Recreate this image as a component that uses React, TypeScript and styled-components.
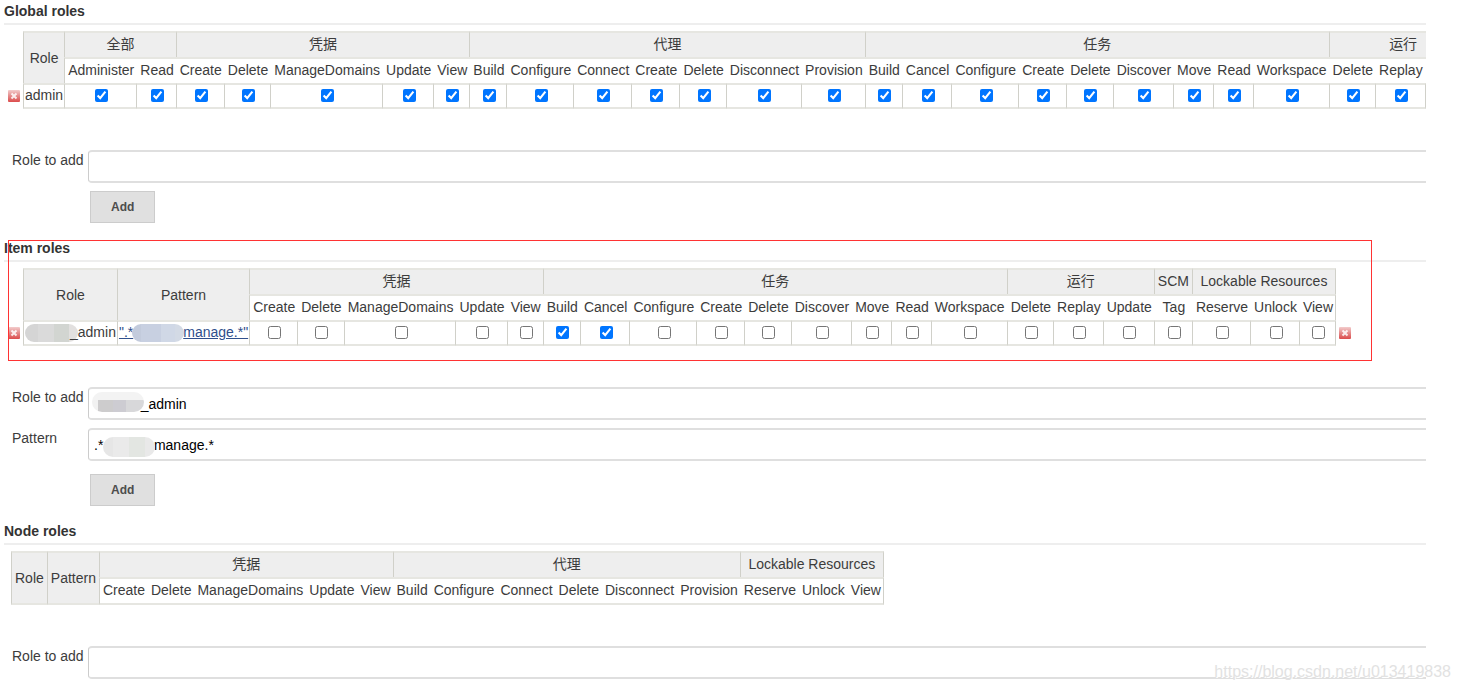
import React, { useId } from "react";
import styled, { createGlobalStyle, css } from "styled-components";

const GlobalStyle = createGlobalStyle`
  body {
    margin: 0;
    background: #fff;
    color: #3c3c3c;
    font-family: "Liberation Sans", Arial, "Noto Sans CJK SC", sans-serif;
    font-size: 14px;
    line-height: 20px;
  }
`;

const line = "#e6e6e1";
const divider = "#d0d0c9";

const Page = styled.main`
  position: relative;
  overflow: hidden;
  padding: 0 34px 0 4px;
`;

const Section = styled.section`
  position: relative;
`;

const Heading = styled.h2`
  margin: 0;
  padding: 1px 0 2px;
  font-size: 14px;
  line-height: 20px;
  font-weight: bold;
  color: #333;
  border-bottom: 2px solid #eee;
`;

const Clip = styled.div`
  overflow: hidden;
`;

const Matrix = styled.table<{ $bare?: boolean }>`
  border-collapse: separate;
  border-spacing: 0;
  margin: 6px 0 0 ${(p) => (p.$bare ? 7 : 4)}px;
  white-space: nowrap;
  text-align: center;
`;

const IconCell = styled.td<{ $end?: boolean }>`
  box-sizing: border-box;
  padding: ${(p) => (p.$end ? "0 0 0 3px" : "0 3px 0 0")};
  line-height: 0;
  vertical-align: middle;
`;

const HeadCell = styled.th<{ $last?: boolean }>`
  height: 22px;
  padding: 0 3px 2px;
  font-weight: normal;
  background: #eee;
  border-top: 2px solid ${line};
  border-left: 1px solid ${divider};
  ${(p) => p.$last && css`border-right: 1px solid ${divider};`}
`;

const NameCell = styled.th<{ $first?: boolean; $last?: boolean; $end?: boolean }>`
  height: 22px;
  padding: 0 2px 2px 4px;
  font-weight: normal;
  border-top: 2px solid ${line};
  ${(p) => p.$first && css`
    padding-left: 3px;
    border-left: 1px solid ${divider};
  `}
  &:empty {
    min-width: 46px;
  }
  ${(p) => p.$last && css`border-right: 1px solid ${divider};`}
  ${(p) => p.$end && css`border-bottom: 2px solid ${line};`}
`;

const SpanCell = styled(HeadCell)<{ $end?: boolean }>`
  padding: 0 3px;
  ${(p) => p.$end && css`border-bottom: 2px solid ${line};`}
`;

const BodyCell = styled.td<{ $last?: boolean }>`
  height: 20px;
  padding: 0 1px 2px;
  border-top: 2px solid ${line};
  border-bottom: 2px solid ${line};
  border-left: 1px solid ${divider};
  ${(p) => p.$last && css`border-right: 1px solid ${divider};`}
`;

const TickCell = styled(BodyCell)`
  padding-left: 3px;
`;

const Tick = styled.input`
  display: block;
  width: 13px;
  height: 13px;
  margin: 0 auto;
  accent-color: #0075ff;
`;

const IconButton = styled.button`
  display: block;
  padding: 0;
  border: 0;
  background: none;
  line-height: 0;
`;

const PatternLink = styled.a`
  color: #2f4f8c;
  text-decoration: underline;
`;

const tones = {
  role: "linear-gradient(90deg, #d5d5d5 25%, #dadada 25% 54%, #d2d5d1 54% 83%, #e2e0df 83%)",
  link: "linear-gradient(90deg, #c3cbdc 18%, #c8d0e1 18% 55%, #d0d8e6 55% 82%, #d3dae5 82%)",
  value: "linear-gradient(#f3f3f3 40%, transparent 40%), linear-gradient(90deg, #f1f1f1 12%, #cdcccd 12% 40%, #cdccd2 40% 66%, #d8d8da 66%)",
  pattern: "linear-gradient(90deg, #e6e6e6 20%, #eaeaea 20% 50%, #e3e6e2 50% 80%, #e9e9e9 80%)",
};

const Smudge = styled.span<{ $tone: keyof typeof tones }>`
  display: inline-block;
  height: 18px;
  border-radius: 9px;
  vertical-align: middle;
  background: ${(p) => tones[p.$tone]};
`;

const RoleSmudge = styled(Smudge)`
  width: 53px;
  margin-right: -8px;
`;

const LinkSmudge = styled(Smudge)`
  width: 52px;
  margin: 0 -1px;
`;

const FieldSmudge = styled(Smudge)<{ $left: number; $top: number }>`
  position: absolute;
  left: ${(p) => p.$left}px;
  top: ${(p) => p.$top}px;
  width: 52px;
  height: 20px;
  border-radius: 10px;
`;

const Form = styled.form<{ $closing?: boolean }>`
  display: flex;
  flex-direction: column;
  gap: 8px;
  padding: 41px 0 ${(p) => (p.$closing ? 10 : 14)}px 8px;
`;

const Field = styled.div`
  display: flex;
  align-items: flex-start;
`;

const Label = styled.label`
  flex: none;
  width: 76px;
`;

const Control = styled.div`
  position: relative;
  flex: 1;
  margin-right: -8px;
`;

const TextBox = styled.input`
  display: block;
  box-sizing: border-box;
  width: 100%;
  height: 33px;
  padding: 0 5px;
  border: solid #ccc;
  border-width: 2px 1px;
  border-color: #dfdfdf #ccc;
  border-radius: 4px;
  background: #fff;
  color: #000;
  font: inherit;
`;

const Actions = styled.div<{ $spaced?: boolean }>`
  padding: ${(p) => (p.$spaced ? 5 : 0)}px 0 0 78px;
`;

const AddButton = styled.button`
  display: block;
  height: 32px;
  padding: 0 20px;
  border: 1px solid #ccc;
  background: #e0e0e0;
  color: #4d4d4d;
  font: bold 12px/20px "Liberation Sans", Arial, sans-serif;
`;

const Highlight = styled.div`
  position: absolute;
  left: 4px;
  right: 54px;
  top: 3px;
  height: 119px;
  border: 1px solid #f33;
  pointer-events: none;
`;

const Watermark = styled.div`
  position: absolute;
  right: 9px;
  bottom: 7px;
  color: #e2e2e2;
  font-size: 16px;
  line-height: 20px;
  text-shadow: 1px 1px 0 #fff;
  pointer-events: none;
`;

type Group = { title: string; names: string[] };

const credentials: Group = { title: "凭据", names: ["Create", "Delete", "ManageDomains", "Update", "View"] };
const jobs: Group = {
  title: "任务",
  names: ["Build", "Cancel", "Configure", "Create", "Delete", "Discover", "Move", "Read", "Workspace"],
};
const runs: Group = { title: "运行", names: ["Delete", "Replay", "Update"] };
const lockable: Group = { title: "Lockable Resources", names: ["Reserve", "Unlock", "View"] };

const globalGroups: Group[] = [
  { title: "全部", names: ["Administer", "Read"] },
  credentials,
  { title: "代理", names: ["Build", "Configure", "Connect", "Create", "Delete", "Disconnect", "Provision"] },
  jobs,
  { title: "运行", names: ["Delete", "Replay", ""] },
];
const itemGroups: Group[] = [credentials, jobs, runs, { title: "SCM", names: ["Tag"] }, lockable];
const nodeGroups: Group[] = [
  credentials,
  { title: "代理", names: ["Build", "Configure", "Connect", "Delete", "Disconnect", "Provision"] },
  lockable,
];

function RemoveButton() {
  const fill = useId();
  return (
    <IconButton type="button" aria-label="Remove role">
      <svg width="12" height="12" viewBox="0 0 12 12">
        <defs>
          <linearGradient id={fill} x1="0" y1="0" x2="0" y2="1">
            <stop offset="0" stopColor="#f3cccc" />
            <stop offset="0.5" stopColor="#e48a8a" />
            <stop offset="1" stopColor="#dc4c4c" />
          </linearGradient>
        </defs>
        <rect width="12" height="12" rx="1" fill={`url(#${fill})`} />
        <path d="M3.5 3.5L8.5 8.5M8.5 3.5L3.5 8.5" stroke="#fff" strokeOpacity="0.85" strokeWidth="2" />
      </svg>
    </IconButton>
  );
}

type MatrixProps = {
  groups: Group[];
  withPattern?: boolean;
  role?: React.ReactNode;
  pattern?: React.ReactNode;
  isChecked?: (group: Group, name: string) => boolean;
  removeAtEnd?: boolean;
};

function RoleMatrix({ groups, withPattern, role, pattern, isChecked, removeAtEnd }: MatrixProps) {
  const hasRow = role !== undefined;
  const lastGroup = groups.length - 1;
  return (
    <Clip>
      <Matrix $bare={!hasRow}>
        <thead>
          <tr>
            {hasRow && <td rowSpan={2} />}
            <SpanCell rowSpan={2} $end={!hasRow}>Role</SpanCell>
            {withPattern && <SpanCell rowSpan={2} $end={!hasRow}>Pattern</SpanCell>}
            {groups.map((g, i) => (
              <HeadCell key={g.title} colSpan={g.names.length} $last={i === lastGroup}>{g.title}</HeadCell>
            ))}
          </tr>
          <tr>
            {groups.map((g, i) =>
              g.names.map((n, j) => (
                <NameCell
                  key={g.title + n}
                  $first={i === 0 && j === 0}
                  $last={i === lastGroup && j === g.names.length - 1}
                  $end={!hasRow}
                >
                  {n || null}
                </NameCell>
              ))
            )}
          </tr>
        </thead>
        {hasRow && (
          <tbody>
            <tr>
              <IconCell><RemoveButton /></IconCell>
              <BodyCell>{role}</BodyCell>
              {withPattern && <BodyCell>{pattern}</BodyCell>}
              {groups.map((g, i) =>
                g.names.map((n, j) => (
                  <TickCell key={g.title + n} $last={i === lastGroup && j === g.names.length - 1}>
                    {n && <Tick type="checkbox" aria-label={`${g.title} ${n}`} defaultChecked={isChecked?.(g, n)} />}
                  </TickCell>
                ))
              )}
              {removeAtEnd && <IconCell $end><RemoveButton /></IconCell>}
            </tr>
          </tbody>
        )}
      </Matrix>
    </Clip>
  );
}

export default function App() {
  return (
    <>
      <GlobalStyle />
      <Page>
        <Clip>
          <Section>
            <Heading>Global roles</Heading>
            <RoleMatrix groups={globalGroups} role="admin" isChecked={() => true} />
            <Form>
              <Field>
                <Label htmlFor="global-role">Role to add</Label>
                <Control><TextBox id="global-role" /></Control>
              </Field>
              <Actions><AddButton type="button">Add</AddButton></Actions>
            </Form>
          </Section>

          <Section>
            <Heading>Item roles</Heading>
            <RoleMatrix
              groups={itemGroups}
              withPattern
              role={<><RoleSmudge $tone="role" />_admin</>}
              pattern={<PatternLink href="#pattern">".*<LinkSmudge $tone="link" />manage.*"</PatternLink>}
              isChecked={(g, n) => g === jobs && (n === "Build" || n === "Cancel")}
              removeAtEnd
            />
            <Highlight />
            <Form>
              <Field>
                <Label htmlFor="item-role">Role to add</Label>
                <Control>
                  <TextBox id="item-role" defaultValue={"\u00a0".repeat(12) + "_admin"} />
                  <FieldSmudge $tone="value" $left={4} $top={5} />
                </Control>
              </Field>
              <Field>
                <Label htmlFor="item-pattern">Pattern</Label>
                <Control>
                  <TextBox id="item-pattern" defaultValue={".*" + "\u00a0".repeat(13) + "manage.*"} />
                  <FieldSmudge $tone="pattern" $left={15} $top={9} />
                </Control>
              </Field>
              <Actions $spaced><AddButton type="button">Add</AddButton></Actions>
            </Form>
          </Section>

          <Section>
            <Heading>Node roles</Heading>
            <RoleMatrix groups={nodeGroups} withPattern />
            <Form $closing>
              <Field>
                <Label htmlFor="node-role">Role to add</Label>
                <Control><TextBox id="node-role" /></Control>
              </Field>
            </Form>
          </Section>
        </Clip>
        <Watermark>https://blog.csdn.net/u013419838</Watermark>
      </Page>
    </>
  );
}
